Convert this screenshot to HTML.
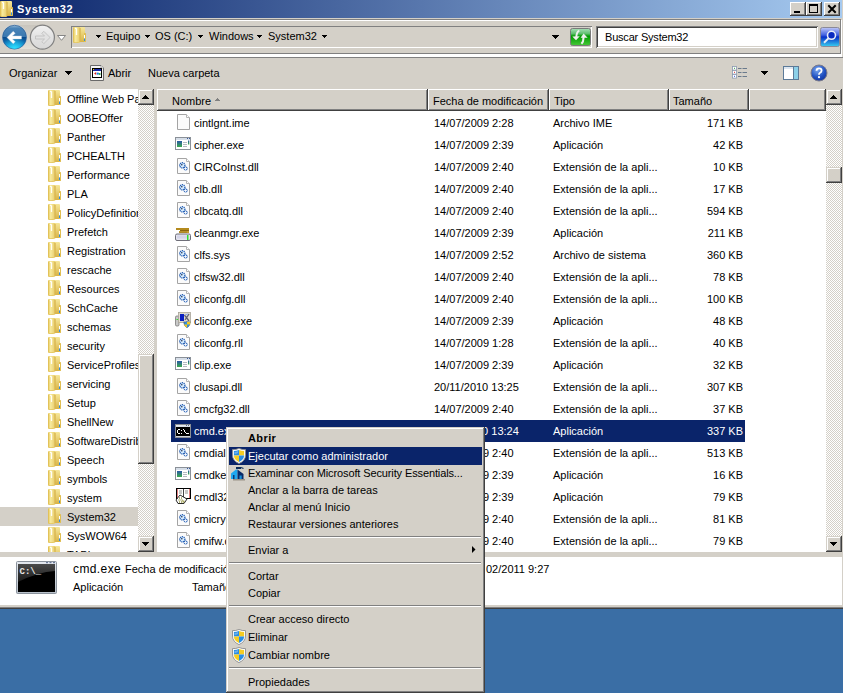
<!DOCTYPE html><html><head><meta charset="utf-8"><style>
*{margin:0;padding:0;box-sizing:border-box}
html,body{width:843px;height:693px;overflow:hidden;background:#3A6EA5}
body{position:relative;font-family:"Liberation Sans",sans-serif;font-size:11px;color:#000}
.ab{position:absolute}
.t{position:absolute;white-space:nowrap;line-height:13px}
.face{background:#D4D0C8}
.dither{background-color:#fff;background-image:linear-gradient(45deg,#D4D0C8 25%,transparent 25%,transparent 75%,#D4D0C8 75%),linear-gradient(45deg,#D4D0C8 25%,transparent 25%,transparent 75%,#D4D0C8 75%);background-size:2px 2px;background-position:0 0,1px 1px}
.btn{position:absolute;background:#D4D0C8;box-shadow:inset -1px -1px #404040,inset 1px 1px #fff,inset -2px -2px #808080}
.sb{position:absolute;background:#D4D0C8;box-shadow:inset -1px -1px #404040,inset 1px 1px #D4D0C8,inset -2px -2px #808080,inset 2px 2px #fff}
.hdr{position:absolute;background:#D4D0C8;box-shadow:inset -1px -1px #404040,inset 1px 1px #fff,inset -2px -2px #808080;top:89px;height:22px}
</style></head><body>
<svg width="0" height="0" style="position:absolute">
<defs>
<linearGradient id="fyL" x1="0" y1="0" x2="1" y2="0"><stop offset="0" stop-color="#E6C65A"/><stop offset="0.35" stop-color="#F7EA9C"/><stop offset="1" stop-color="#E6C866"/></linearGradient>
<linearGradient id="fyR" x1="0" y1="0" x2="0" y2="1"><stop offset="0" stop-color="#F6E79A"/><stop offset="1" stop-color="#D9B446"/></linearGradient>
<symbol id="fold" viewBox="0 0 13 16">
<path d="M6 0.5 Q6 0 7 0 H11 Q12 0 12 1 V15 H6Z" fill="url(#fyR)"/>
<path d="M11 6 H12.5 Q13 6 13 7 V14.5 Q13 15 12 15 H11Z" fill="#E0BE52"/>
<path d="M0 1 Q0 0 1 0 H6.5 L7.5 1 V15 Q7 16 5.5 16 H1.5 Q0 16 0 14.5Z" fill="url(#fyL)"/>
<path d="M0.4 1 V14.5 Q0.4 15.6 1.5 15.6 H5.5" stroke="#DCBA50" stroke-width="0.8" fill="none" opacity="0.8"/>
<rect x="6.5" y="1" width="1" height="14" fill="#CFA83E" opacity="0.75"/>
<path d="M2 1.2 L3.5 2 V8" stroke="#fff" stroke-width="1.3" fill="none" opacity="0.95"/>
<rect x="11" y="8" width="1" height="3.5" fill="#fff"/>
<rect x="11" y="11.5" width="1" height="2.5" fill="#2E8EE0"/>
</symbol>
<symbol id="doc" viewBox="0 0 13 16">
<path d="M0.5 0.5 H9.5 L12.5 3.5 V15.5 H0.5 Z" fill="#FBFBFB" stroke="#A4A4A4"/>
<path d="M9.5 0.5 V3.5 H12.5" fill="#fff" stroke="#B4B4B4"/>
</symbol>
<symbol id="dll" viewBox="0 0 13 16">
<path d="M0.5 0.5 H9.5 L12.5 3.5 V15.5 H0.5 Z" fill="#FBFBFB" stroke="#A4A4A4"/>
<path d="M9.5 0.5 V3.5 H12.5" fill="#fff" stroke="#B4B4B4"/>
<circle cx="5.3" cy="7.3" r="2.6" fill="#D8EEFF" stroke="#1E58B0" stroke-width="1.3" stroke-dasharray="1.2 0.7"/>
<circle cx="4.8" cy="6.8" r="0.8" fill="#1A2A50"/>
<circle cx="8.6" cy="10.6" r="2" fill="#2A64B8"/>
<path d="M8.6 9 V12.2 M7 10.6 H10.2" stroke="#fff" stroke-width="0.9"/>
</symbol>
<linearGradient id="bg2" x1="0" y1="0" x2="0" y2="1"><stop offset="0" stop-color="#2A58A8"/><stop offset="1" stop-color="#3AAA4A"/></linearGradient>
<symbol id="exe" viewBox="0 0 16 13">
<rect x="0.5" y="0.5" width="15" height="12" fill="#fff" stroke="#8A9098"/>
<rect x="1" y="1" width="14" height="2" fill="#D6DEE8"/>
<rect x="12" y="1" width="1" height="1" fill="#3A5A98"/><rect x="14" y="1" width="1" height="1" fill="#3A5A98"/>
<rect x="2" y="4" width="5" height="6" fill="url(#bg2)"/>
<path d="M8 5.5 H12 M8 7.5 H12 M8 9.5 H12" stroke="#B4B8C0"/>
<rect x="13" y="3.5" width="1.3" height="4" fill="url(#bg2)"/>
</symbol>
<symbol id="shield" viewBox="0 0 16 16">
<path d="M8 0.5 Q11.2 1.9 14.5 1.6 V7 Q14.6 12.6 8 15.6 Q1.4 12.6 1.5 7 V1.6 Q4.8 1.9 8 0.5Z" fill="#fff" stroke="#8C8C8C" stroke-width="0.9"/>
<path d="M8 2.1 Q5.4 3.1 2.9 3.1 V7.6 H8Z" fill="#2A8EE6"/>
<path d="M8 2.1 Q10.6 3.1 13.1 3.1 V7.6 H8Z" fill="#F6CC22"/>
<path d="M2.9 7.6 H8 V14 Q3.1 11.9 2.9 7.6Z" fill="#F6CC22"/>
<path d="M13.1 7.6 H8 V14 Q12.9 11.9 13.1 7.6Z" fill="#2A8EE6"/>
<path d="M3.5 4 Q5 3.8 7 3 V5 Q5 6 3.5 6Z" fill="#fff" opacity="0.3"/>
</symbol>
</defs></svg>

<div class="ab face" style="left:0;top:0;width:843px;height:609px"></div>
<div class="ab" style="left:0;top:0;width:842px;height:18px;background:linear-gradient(to right,#0A246A,#A6CAF0)"></div>
<svg class="ab" style="left:0px;top:1px" width="13" height="16" viewBox="0 0 13 16"><use href="#fold"/></svg>
<div class="t" style="left:17px;top:3px;color:#fff;font-weight:bold;letter-spacing:0.6px">System32</div>
<div class="btn" style="left:790px;top:2px;width:16px;height:14px"></div>
<div class="btn" style="left:806px;top:2px;width:16px;height:14px"></div>
<div class="btn" style="left:824px;top:2px;width:16px;height:14px"></div>
<div class="ab" style="left:794px;top:11px;width:6px;height:2px;background:#000"></div>
<div class="ab" style="left:809px;top:4px;width:9px;height:9px;border:1px solid #000;border-top-width:2px"></div>
<svg class="ab" style="left:824px;top:2px" width="16" height="14"><path d="M4.3 3.3 L11.7 10.7 M11.7 3.3 L4.3 10.7" stroke="#000" stroke-width="2"/></svg>
<div class="ab" style="left:0;top:19px;width:841px;height:1px;background:#808080"></div>
<div class="ab" style="left:0;top:20px;width:840px;height:1px;background:#fff"></div>
<svg class="ab" style="left:0;top:22px" width="70" height="30" viewBox="0 0 70 30">
<defs>
<linearGradient id="bkt" x1="0" y1="0" x2="0" y2="1"><stop offset="0" stop-color="#9ABCD8"/><stop offset="0.12" stop-color="#4A84B8"/><stop offset="0.49" stop-color="#3A78B0"/><stop offset="0.5" stop-color="#0A4A8C"/><stop offset="0.8" stop-color="#0C78C0"/><stop offset="1" stop-color="#18B0E0"/></linearGradient>
<radialGradient id="bkg" cx="0.5" cy="1" r="0.55"><stop offset="0" stop-color="#30E0FF"/><stop offset="1" stop-color="#30E0FF" stop-opacity="0"/></radialGradient>
<linearGradient id="fwt" x1="0" y1="0" x2="0" y2="1"><stop offset="0" stop-color="#F2F2F2"/><stop offset="0.5" stop-color="#E2E2E2"/><stop offset="1" stop-color="#D8D8D8"/></linearGradient>
<linearGradient id="pill" x1="0" y1="0" x2="0" y2="1"><stop offset="0" stop-color="#C9C5BD"/><stop offset="1" stop-color="#E2DFD8"/></linearGradient>
</defs>
<path d="M14 3 H42 V27 H14Z" fill="url(#pill)"/>
<circle cx="14.5" cy="15.2" r="12.6" fill="#C8D0D8"/>
<circle cx="14.5" cy="15.2" r="11.9" fill="url(#bkt)" stroke="#2A5A90" stroke-width="0.7"/>
<circle cx="14.5" cy="15.2" r="11.5" fill="url(#bkg)"/>
<path d="M7 15.5 L13.2 9.3 L15.2 11.3 L12.5 14 H21.5 V17 H12.5 L15.2 19.7 L13.2 21.7 Z" fill="#fff" stroke="#C8D4E0" stroke-width="0.4"/>
<circle cx="42.4" cy="15.2" r="12" fill="url(#fwt)" stroke="#808080" stroke-width="1.2"/>
<path d="M50 15.5 L43.8 9.3 L41.8 11.3 L44.5 14 H35.5 V17 H44.5 L41.8 19.7 L43.8 21.7 Z" fill="#E2E2E2" stroke="#B8B8B8" stroke-width="0.7"/>
<path d="M57.5 13.5 H65.5 L61.5 18.3 Z" fill="#fff" stroke="#7A7A7A" stroke-width="0.9"/>
</svg>
<div class="ab" style="left:71px;top:26px;width:521px;height:22px;box-shadow:inset 1px 1px #808080,inset -1px -1px #fff;background:#D4D0C8"></div>
<svg class="ab" style="left:73px;top:27px" width="13" height="16" viewBox="0 0 13 16"><use href="#fold"/></svg>
<svg class="ab" style="left:96px;top:35px" width="5" height="3"><path d="M0 0h5v1h-1v1h-1v1h-1V2H1V1H0z" fill="#000"/></svg>
<div class="t" style="left:106px;top:30px">Equipo</div>
<svg class="ab" style="left:145px;top:35px" width="5" height="3"><path d="M0 0h5v1h-1v1h-1v1h-1V2H1V1H0z" fill="#000"/></svg>
<div class="t" style="left:155px;top:30px">OS (C:)</div>
<svg class="ab" style="left:198px;top:35px" width="5" height="3"><path d="M0 0h5v1h-1v1h-1v1h-1V2H1V1H0z" fill="#000"/></svg>
<div class="t" style="left:209px;top:30px">Windows</div>
<svg class="ab" style="left:257px;top:35px" width="5" height="3"><path d="M0 0h5v1h-1v1h-1v1h-1V2H1V1H0z" fill="#000"/></svg>
<div class="t" style="left:268px;top:30px">System32</div>
<svg class="ab" style="left:322px;top:35px" width="5" height="3"><path d="M0 0h5v1h-1v1h-1v1h-1V2H1V1H0z" fill="#000"/></svg>
<svg class="ab" style="left:552px;top:35px" width="7" height="4"><path d="M0 0h7v1h-1v1h-1v1h-1v1h-1V3H2V2H1V1H0z" fill="#000"/></svg>
<svg class="ab" style="left:570px;top:28px" width="21" height="18" viewBox="0 0 21 18">
<defs><linearGradient id="rf" x1="0" y1="0" x2="0" y2="1"><stop offset="0" stop-color="#A8E0B8"/><stop offset="0.3" stop-color="#60C070"/><stop offset="0.45" stop-color="#009A00"/><stop offset="1" stop-color="#48C838"/></linearGradient></defs>
<rect x="0.5" y="0.5" width="20" height="17" rx="2" fill="url(#rf)" stroke="#7A7A7A"/>
<path d="M2.3 8.6 L9.8 8.2 L6 12.3 Z" fill="#F0F0F0"/>
<path d="M9.3 2.6 Q6.6 3.6 6.3 9" stroke="#F0F0F0" stroke-width="2" fill="none"/>
<path d="M10.6 9.8 L17.6 9.8 L13.6 5.6Z" fill="#F0F0F0"/>
<path d="M13.5 9 Q13.6 13.8 11.4 15.8" stroke="#F0F0F0" stroke-width="2" fill="none"/>
</svg>
<div class="ab" style="left:596px;top:26px;width:222px;height:22px;background:#fff;box-shadow:inset 1px 1px #808080,inset -1px -1px #fff,inset 2px 2px #404040,inset -2px -2px #D4D0C8"></div>
<div class="t" style="left:605px;top:31px;letter-spacing:-0.2px">Buscar System32</div>
<svg class="ab" style="left:820px;top:27px" width="20" height="20" viewBox="0 0 20 20">
<defs><linearGradient id="sg" x1="0" y1="0" x2="0" y2="1"><stop offset="0" stop-color="#C0C8F8"/><stop offset="0.4" stop-color="#4060E0"/><stop offset="0.5" stop-color="#0830C8"/><stop offset="1" stop-color="#38D0F0"/></linearGradient></defs>
<rect x="0.5" y="0.5" width="19" height="19" rx="2" fill="url(#sg)" stroke="#8A8A98"/>
<circle cx="11.5" cy="8.3" r="4" fill="#0A2AC0" stroke="#E8EEF8" stroke-width="1.6"/>
<path d="M8.5 11.3 L4 15.8" stroke="#E8EEF8" stroke-width="2"/>
</svg>
<div class="ab" style="left:840px;top:19px;width:1px;height:35px;background:#808080"></div>
<div class="ab" style="left:841px;top:20px;width:1px;height:37px;background:#fff"></div>
<div class="ab" style="left:842px;top:18px;width:1px;height:40px;background:#D4D0C8"></div>
<div class="ab" style="left:0;top:53px;width:841px;height:1px;background:#808080"></div>
<div class="ab" style="left:0;top:54px;width:842px;height:3px;background:#fff"></div>
<div class="ab" style="left:0;top:57px;width:843px;height:1px;background:#808080"></div>
<div class="t" style="left:9px;top:67px">Organizar</div>
<svg class="ab" style="left:65px;top:71px" width="7" height="4"><path d="M0 0h7v1h-1v1h-1v1h-1v1h-1V3H2V2H1V1H0z" fill="#000"/></svg>
<svg class="ab" style="left:90px;top:65px" width="15" height="16" viewBox="0 0 15 16">
<path d="M0.5 0.5 H11 L13.5 3 V15.5 H0.5Z" fill="#F6F6F6" stroke="#6A6A6A"/>
<path d="M11 0.5 V3 H13.5" fill="#fff" stroke="#9A9A9A" stroke-width="0.8"/>
<rect x="2.5" y="3.5" width="9" height="9" fill="#fff" stroke="#000"/>
<rect x="3" y="4" width="8" height="2" fill="#1828A8"/>
<rect x="3" y="4" width="1" height="1" fill="#F0D000"/>
<path d="M4 8.5 L6.2 7 V10Z" fill="#E02020"/>
<circle cx="7.8" cy="8.6" r="1.2" fill="#2080E0"/>
<circle cx="9.7" cy="9" r="1" fill="#20B040"/>
</svg>
<div class="t" style="left:108px;top:67px">Abrir</div>
<div class="t" style="left:148px;top:67px">Nueva carpeta</div>
<svg class="ab" style="left:732px;top:66px" width="16" height="13" viewBox="0 0 16 13">
<rect x="0.5" y="0.5" width="4" height="3.6" fill="#fff" stroke="#8A9AB0" stroke-width="0.8"/><rect x="2" y="1.8" width="1" height="1" fill="#30A040"/>
<rect x="0.5" y="4.5" width="4" height="3.6" fill="#fff" stroke="#8A9AB0" stroke-width="0.8"/><rect x="2" y="5.8" width="1" height="1" fill="#E03030"/>
<rect x="0.5" y="8.5" width="4" height="3.6" fill="#fff" stroke="#8A9AB0" stroke-width="0.8"/><rect x="2" y="9.8" width="1" height="1" fill="#3050E0"/>
<path d="M6 2.5 H9.5 M10.5 2.5 H15 M6 6.5 H9.5 M10.5 6.5 H15 M6 10.5 H9.5 M10.5 10.5 H15" stroke="#6A7A8C" stroke-width="1"/>
</svg>
<svg class="ab" style="left:761px;top:71px" width="7" height="4"><path d="M0 0h7v1h-1v1h-1v1h-1v1h-1V3H2V2H1V1H0z" fill="#000"/></svg>
<svg class="ab" style="left:783px;top:66px" width="16" height="14" viewBox="0 0 16 14">
<rect x="0.5" y="0.5" width="15" height="13" fill="#fff" stroke="#5C7A98"/>
<rect x="1" y="1" width="9" height="2" fill="#DDE6F0"/>
<rect x="10" y="1" width="5" height="12" fill="#8CD0E8"/>
<path d="M10.5 1 V13" stroke="#5C7A98"/>
</svg>
<svg class="ab" style="left:810px;top:64px" width="18" height="18" viewBox="0 0 18 18">
<defs><radialGradient id="hg" cx="0.4" cy="0.3" r="0.8"><stop offset="0" stop-color="#7AA8F0"/><stop offset="0.6" stop-color="#2050C0"/><stop offset="1" stop-color="#10309A"/></radialGradient></defs>
<circle cx="9" cy="9" r="8" fill="url(#hg)" stroke="#7A7A8A" stroke-width="1"/>
<path d="M6.5 6.8 Q6.5 4.3 9 4.3 Q11.6 4.3 11.6 6.6 Q11.6 8.2 9.8 9 Q9 9.4 9 10.8" stroke="#fff" stroke-width="1.8" fill="none"/>
<circle cx="9" cy="13.2" r="1.1" fill="#fff"/>
</svg>
<div class="ab" style="left:0;top:89px;width:138px;height:463px;background:#fff;overflow:hidden">
<svg class="ab" style="left:48px;top:1px" width="13" height="16" viewBox="0 0 13 16"><use href="#fold"/></svg>
<div class="t" style="left:67px;top:4px">Offline Web Pages</div>
<svg class="ab" style="left:48px;top:20px" width="13" height="16" viewBox="0 0 13 16"><use href="#fold"/></svg>
<div class="t" style="left:67px;top:23px">OOBEOffer</div>
<svg class="ab" style="left:48px;top:39px" width="13" height="16" viewBox="0 0 13 16"><use href="#fold"/></svg>
<div class="t" style="left:67px;top:42px">Panther</div>
<svg class="ab" style="left:48px;top:58px" width="13" height="16" viewBox="0 0 13 16"><use href="#fold"/></svg>
<div class="t" style="left:67px;top:61px">PCHEALTH</div>
<svg class="ab" style="left:48px;top:77px" width="13" height="16" viewBox="0 0 13 16"><use href="#fold"/></svg>
<div class="t" style="left:67px;top:80px">Performance</div>
<svg class="ab" style="left:48px;top:96px" width="13" height="16" viewBox="0 0 13 16"><use href="#fold"/></svg>
<div class="t" style="left:67px;top:99px">PLA</div>
<svg class="ab" style="left:48px;top:115px" width="13" height="16" viewBox="0 0 13 16"><use href="#fold"/></svg>
<div class="t" style="left:67px;top:118px">PolicyDefinitions</div>
<svg class="ab" style="left:48px;top:134px" width="13" height="16" viewBox="0 0 13 16"><use href="#fold"/></svg>
<div class="t" style="left:67px;top:137px">Prefetch</div>
<svg class="ab" style="left:48px;top:153px" width="13" height="16" viewBox="0 0 13 16"><use href="#fold"/></svg>
<div class="t" style="left:67px;top:156px">Registration</div>
<svg class="ab" style="left:48px;top:172px" width="13" height="16" viewBox="0 0 13 16"><use href="#fold"/></svg>
<div class="t" style="left:67px;top:175px">rescache</div>
<svg class="ab" style="left:48px;top:191px" width="13" height="16" viewBox="0 0 13 16"><use href="#fold"/></svg>
<div class="t" style="left:67px;top:194px">Resources</div>
<svg class="ab" style="left:48px;top:210px" width="13" height="16" viewBox="0 0 13 16"><use href="#fold"/></svg>
<div class="t" style="left:67px;top:213px">SchCache</div>
<svg class="ab" style="left:48px;top:229px" width="13" height="16" viewBox="0 0 13 16"><use href="#fold"/></svg>
<div class="t" style="left:67px;top:232px">schemas</div>
<svg class="ab" style="left:48px;top:248px" width="13" height="16" viewBox="0 0 13 16"><use href="#fold"/></svg>
<div class="t" style="left:67px;top:251px">security</div>
<svg class="ab" style="left:48px;top:267px" width="13" height="16" viewBox="0 0 13 16"><use href="#fold"/></svg>
<div class="t" style="left:67px;top:270px">ServiceProfiles</div>
<svg class="ab" style="left:48px;top:286px" width="13" height="16" viewBox="0 0 13 16"><use href="#fold"/></svg>
<div class="t" style="left:67px;top:289px">servicing</div>
<svg class="ab" style="left:48px;top:305px" width="13" height="16" viewBox="0 0 13 16"><use href="#fold"/></svg>
<div class="t" style="left:67px;top:308px">Setup</div>
<svg class="ab" style="left:48px;top:324px" width="13" height="16" viewBox="0 0 13 16"><use href="#fold"/></svg>
<div class="t" style="left:67px;top:327px">ShellNew</div>
<svg class="ab" style="left:48px;top:343px" width="13" height="16" viewBox="0 0 13 16"><use href="#fold"/></svg>
<div class="t" style="left:67px;top:346px">SoftwareDistribution</div>
<svg class="ab" style="left:48px;top:362px" width="13" height="16" viewBox="0 0 13 16"><use href="#fold"/></svg>
<div class="t" style="left:67px;top:365px">Speech</div>
<svg class="ab" style="left:48px;top:381px" width="13" height="16" viewBox="0 0 13 16"><use href="#fold"/></svg>
<div class="t" style="left:67px;top:384px">symbols</div>
<svg class="ab" style="left:48px;top:400px" width="13" height="16" viewBox="0 0 13 16"><use href="#fold"/></svg>
<div class="t" style="left:67px;top:403px">system</div>
<div class="ab" style="left:0;top:418px;width:138px;height:19px;background:#D4D0C8"></div>
<svg class="ab" style="left:48px;top:419px" width="13" height="16" viewBox="0 0 13 16"><use href="#fold"/></svg>
<div class="t" style="left:67px;top:422px">System32</div>
<svg class="ab" style="left:48px;top:438px" width="13" height="16" viewBox="0 0 13 16"><use href="#fold"/></svg>
<div class="t" style="left:67px;top:441px">SysWOW64</div>
<svg class="ab" style="left:48px;top:457px" width="13" height="16" viewBox="0 0 13 16"><use href="#fold"/></svg>
<div class="t" style="left:67px;top:460px">TAPI</div>
</div>
<div class="ab dither" style="left:138px;top:89px;width:16px;height:463px"></div>
<div class="sb" style="left:138px;top:89px;width:16px;height:16px"></div>
<svg class="ab" style="left:142px;top:95px" width="7" height="4"><path d="M3 0h1v1h1v1h1v1h1v1H0V3h1V2h1V1h1z" fill="#000"/></svg>
<div class="sb" style="left:138px;top:536px;width:16px;height:16px"></div>
<svg class="ab" style="left:142px;top:542px" width="7" height="4"><path d="M0 0h7v1h-1v1h-1v1h-1v1h-1V3H2V2H1V1H0z" fill="#000"/></svg>
<div class="sb" style="left:138px;top:354px;width:16px;height:110px"></div>
<div class="ab" style="left:157px;top:89px;width:669px;height:463px;background:#fff"></div>
<div class="hdr" style="left:157px;width:271px"></div>
<div class="t" style="left:172px;top:95px">Nombre</div>
<div class="hdr" style="left:428px;width:121px"></div>
<div class="t" style="left:433px;top:95px">Fecha de modificación</div>
<div class="hdr" style="left:549px;width:120px"></div>
<div class="t" style="left:554px;top:95px">Tipo</div>
<div class="hdr" style="left:669px;width:80px"></div>
<div class="t" style="left:673px;top:95px">Tamaño</div>
<div class="hdr" style="left:749px;width:77px"></div>
<svg class="ab" style="left:215px;top:98px" width="5" height="3"><path d="M2 0h1v1h1v1h1v1H0V2h1V1h1z" fill="#808080"/></svg>
<div class="ab" style="left:157px;top:111px;width:669px;height:441px;overflow:hidden">
<svg class="ab" style="left:20px;top:3px" width="13" height="16"><use href="#doc"/></svg>
<div class="t" style="left:37px;top:6px;color:#000">cintlgnt.ime</div>
<div class="t" style="left:277px;top:6px;color:#000">14/07/2009 2:28</div>
<div class="t" style="left:396px;top:6px;color:#000">Archivo IME</div>
<div class="t" style="left:501px;width:85px;text-align:right;top:6px;color:#000">171 KB</div>
<svg class="ab" style="left:18px;top:26px" width="16" height="13"><use href="#exe"/></svg>
<div class="t" style="left:37px;top:28px;color:#000">cipher.exe</div>
<div class="t" style="left:277px;top:28px;color:#000">14/07/2009 2:39</div>
<div class="t" style="left:396px;top:28px;color:#000">Aplicación</div>
<div class="t" style="left:501px;width:85px;text-align:right;top:28px;color:#000">42 KB</div>
<svg class="ab" style="left:20px;top:47px" width="13" height="16"><use href="#dll"/></svg>
<div class="t" style="left:37px;top:50px;color:#000">CIRCoInst.dll</div>
<div class="t" style="left:277px;top:50px;color:#000">14/07/2009 2:40</div>
<div class="t" style="left:396px;top:50px;color:#000">Extensión de la apli...</div>
<div class="t" style="left:501px;width:85px;text-align:right;top:50px;color:#000">10 KB</div>
<svg class="ab" style="left:20px;top:69px" width="13" height="16"><use href="#dll"/></svg>
<div class="t" style="left:37px;top:72px;color:#000">clb.dll</div>
<div class="t" style="left:277px;top:72px;color:#000">14/07/2009 2:40</div>
<div class="t" style="left:396px;top:72px;color:#000">Extensión de la apli...</div>
<div class="t" style="left:501px;width:85px;text-align:right;top:72px;color:#000">17 KB</div>
<svg class="ab" style="left:20px;top:91px" width="13" height="16"><use href="#dll"/></svg>
<div class="t" style="left:37px;top:94px;color:#000">clbcatq.dll</div>
<div class="t" style="left:277px;top:94px;color:#000">14/07/2009 2:40</div>
<div class="t" style="left:396px;top:94px;color:#000">Extensión de la apli...</div>
<div class="t" style="left:501px;width:85px;text-align:right;top:94px;color:#000">594 KB</div>
<svg class="ab" style="left:18px;top:117px" width="16" height="13" viewBox="0 0 16 13"><rect x="1" y="0" width="13" height="2" fill="#B48A1E"/><rect x="5" y="2" width="9" height="1" fill="#8A6410"/><rect x="4" y="3" width="10" height="2" fill="#C49A30"/><path d="M5 3.5 V5 M7 3.5 V5 M9 3.5 V5 M11 3.5 V5" stroke="#7A5A10" stroke-width="0.6"/><rect x="0.5" y="6" width="15" height="6.5" rx="1.5" fill="#E4E4EE" stroke="#6E6E78"/><rect x="2" y="7.5" width="10" height="3" fill="#D4D4E8"/><rect x="12" y="7" width="1.5" height="5" fill="#30E030"/></svg>
<div class="t" style="left:37px;top:116px;color:#000">cleanmgr.exe</div>
<div class="t" style="left:277px;top:116px;color:#000">14/07/2009 2:39</div>
<div class="t" style="left:396px;top:116px;color:#000">Aplicación</div>
<div class="t" style="left:501px;width:85px;text-align:right;top:116px;color:#000">211 KB</div>
<svg class="ab" style="left:20px;top:135px" width="13" height="16"><use href="#dll"/></svg>
<div class="t" style="left:37px;top:138px;color:#000">clfs.sys</div>
<div class="t" style="left:277px;top:138px;color:#000">14/07/2009 2:52</div>
<div class="t" style="left:396px;top:138px;color:#000">Archivo de sistema</div>
<div class="t" style="left:501px;width:85px;text-align:right;top:138px;color:#000">360 KB</div>
<svg class="ab" style="left:20px;top:157px" width="13" height="16"><use href="#dll"/></svg>
<div class="t" style="left:37px;top:160px;color:#000">clfsw32.dll</div>
<div class="t" style="left:277px;top:160px;color:#000">14/07/2009 2:40</div>
<div class="t" style="left:396px;top:160px;color:#000">Extensión de la apli...</div>
<div class="t" style="left:501px;width:85px;text-align:right;top:160px;color:#000">78 KB</div>
<svg class="ab" style="left:20px;top:179px" width="13" height="16"><use href="#dll"/></svg>
<div class="t" style="left:37px;top:182px;color:#000">cliconfg.dll</div>
<div class="t" style="left:277px;top:182px;color:#000">14/07/2009 2:40</div>
<div class="t" style="left:396px;top:182px;color:#000">Extensión de la apli...</div>
<div class="t" style="left:501px;width:85px;text-align:right;top:182px;color:#000">100 KB</div>
<svg class="ab" style="left:18px;top:201px" width="16" height="16" viewBox="0 0 16 16"><rect x="0.5" y="4" width="3.5" height="10" rx="1.2" fill="#C8C8C8" stroke="#6A6A6A" stroke-width="0.7"/><rect x="1.5" y="7" width="2" height="1" fill="#30E030"/><rect x="3.5" y="0.5" width="12" height="10" fill="#E0DCD0" stroke="#A8A498" stroke-width="0.8"/><rect x="5" y="2" width="4" height="7" fill="#0A20C0"/><path d="M9.5 3 L14 9 M14 2 L10 8" stroke="#606070" stroke-width="1.3"/><path d="M10 3 L13 2" stroke="#90B0F0" stroke-width="1"/><path d="M11.5 9.5 Q13.5 10.3 15.2 9.8 Q15.5 14 12 15.8 Q8.5 14 8.8 9.8 Q10.5 10.3 11.5 9.5Z" fill="#2E90EA" stroke="#505050" stroke-width="0.5"/><path d="M12 10 V12.6 H15.2 Q15.3 11 15.2 9.8 Q13.5 10.3 12 10Z M12 12.6 H8.9 Q9.5 14.6 12 15.6Z" fill="#F4C81E"/></svg>
<div class="t" style="left:37px;top:204px;color:#000">cliconfg.exe</div>
<div class="t" style="left:277px;top:204px;color:#000">14/07/2009 2:39</div>
<div class="t" style="left:396px;top:204px;color:#000">Aplicación</div>
<div class="t" style="left:501px;width:85px;text-align:right;top:204px;color:#000">48 KB</div>
<svg class="ab" style="left:20px;top:223px" width="13" height="16"><use href="#dll"/></svg>
<div class="t" style="left:37px;top:226px;color:#000">cliconfg.rll</div>
<div class="t" style="left:277px;top:226px;color:#000">14/07/2009 1:28</div>
<div class="t" style="left:396px;top:226px;color:#000">Extensión de la apli...</div>
<div class="t" style="left:501px;width:85px;text-align:right;top:226px;color:#000">40 KB</div>
<svg class="ab" style="left:18px;top:246px" width="16" height="13"><use href="#exe"/></svg>
<div class="t" style="left:37px;top:248px;color:#000">clip.exe</div>
<div class="t" style="left:277px;top:248px;color:#000">14/07/2009 2:39</div>
<div class="t" style="left:396px;top:248px;color:#000">Aplicación</div>
<div class="t" style="left:501px;width:85px;text-align:right;top:248px;color:#000">32 KB</div>
<svg class="ab" style="left:20px;top:267px" width="13" height="16"><use href="#dll"/></svg>
<div class="t" style="left:37px;top:270px;color:#000">clusapi.dll</div>
<div class="t" style="left:277px;top:270px;color:#000">20/11/2010 13:25</div>
<div class="t" style="left:396px;top:270px;color:#000">Extensión de la apli...</div>
<div class="t" style="left:501px;width:85px;text-align:right;top:270px;color:#000">307 KB</div>
<svg class="ab" style="left:20px;top:289px" width="13" height="16"><use href="#dll"/></svg>
<div class="t" style="left:37px;top:292px;color:#000">cmcfg32.dll</div>
<div class="t" style="left:277px;top:292px;color:#000">14/07/2009 2:40</div>
<div class="t" style="left:396px;top:292px;color:#000">Extensión de la apli...</div>
<div class="t" style="left:501px;width:85px;text-align:right;top:292px;color:#000">37 KB</div>
<div class="ab" style="left:14px;top:309px;width:574px;height:22px;background:#0A246A"></div>
<svg class="ab" style="left:18px;top:313px" width="16" height="14" viewBox="0 0 16 14"><rect x="0.5" y="0.5" width="15" height="13" fill="#D0D4DA" stroke="#8A8E94"/><rect x="1" y="1" width="14" height="1.5" fill="#E6EAF0"/><rect x="11" y="1" width="1" height="1" fill="#5A6A8A"/><rect x="13" y="1" width="1" height="1" fill="#5A6A8A"/><rect x="1" y="3" width="14" height="9" fill="#000"/><g fill="#fff"><rect x="2" y="6" width="1" height="3"/><rect x="3" y="5" width="2" height="1"/><rect x="3" y="9" width="2" height="1"/><rect x="6" y="6" width="1" height="1"/><rect x="6" y="9" width="1" height="1"/><rect x="8" y="5" width="1" height="1"/><rect x="9" y="6" width="1" height="2"/><rect x="10" y="8" width="1" height="1"/><rect x="11" y="9" width="1" height="1"/><rect x="12" y="9" width="2" height="1"/></g></svg>
<div class="t" style="left:37px;top:314px;color:#fff">cmd.exe</div>
<div class="t" style="left:277px;top:314px;color:#fff">20/11/2010 13:24</div>
<div class="t" style="left:396px;top:314px;color:#fff">Aplicación</div>
<div class="t" style="left:501px;width:85px;text-align:right;top:314px;color:#fff">337 KB</div>
<svg class="ab" style="left:20px;top:333px" width="13" height="16"><use href="#dll"/></svg>
<div class="t" style="left:37px;top:336px;color:#000">cmdial32.dll</div>
<div class="t" style="left:277px;top:336px;color:#000">14/07/2009 2:40</div>
<div class="t" style="left:396px;top:336px;color:#000">Extensión de la apli...</div>
<div class="t" style="left:501px;width:85px;text-align:right;top:336px;color:#000">513 KB</div>
<svg class="ab" style="left:18px;top:356px" width="16" height="13"><use href="#exe"/></svg>
<div class="t" style="left:37px;top:358px;color:#000">cmdkey.exe</div>
<div class="t" style="left:277px;top:358px;color:#000">14/07/2009 2:39</div>
<div class="t" style="left:396px;top:358px;color:#000">Aplicación</div>
<div class="t" style="left:501px;width:85px;text-align:right;top:358px;color:#000">16 KB</div>
<svg class="ab" style="left:18px;top:377px" width="16" height="16" viewBox="0 0 16 16"><rect x="1.5" y="0.5" width="14" height="10" fill="#fff" stroke="#000"/><rect x="2" y="1" width="1" height="9" fill="#E08080"/><rect x="14" y="1" width="1" height="9" fill="#E08080"/><path d="M8.5 1 V10" stroke="#444"/><rect x="4" y="2" width="3" height="4" fill="#C8C8C8"/><rect x="10" y="2" width="3" height="4" fill="#C8C8C8"/><path d="M1 12 L5 7 L12 11 L9 15.5 H3Z" fill="#fff" stroke="#111" stroke-width="0.9"/><path d="M4 10 H7 M3.5 12 H8 M4 14 H8" stroke="#9A9A50" stroke-width="1.3" stroke-dasharray="1 1"/><path d="M7 12 L10 13 L8 15.5Z" fill="#A8A860"/></svg>
<div class="t" style="left:37px;top:380px;color:#000">cmdl32.exe</div>
<div class="t" style="left:277px;top:380px;color:#000">14/07/2009 2:39</div>
<div class="t" style="left:396px;top:380px;color:#000">Aplicación</div>
<div class="t" style="left:501px;width:85px;text-align:right;top:380px;color:#000">79 KB</div>
<svg class="ab" style="left:20px;top:399px" width="13" height="16"><use href="#dll"/></svg>
<div class="t" style="left:37px;top:402px;color:#000">cmicryptinstall.dll</div>
<div class="t" style="left:277px;top:402px;color:#000">14/07/2009 2:40</div>
<div class="t" style="left:396px;top:402px;color:#000">Extensión de la apli...</div>
<div class="t" style="left:501px;width:85px;text-align:right;top:402px;color:#000">81 KB</div>
<svg class="ab" style="left:20px;top:421px" width="13" height="16"><use href="#dll"/></svg>
<div class="t" style="left:37px;top:424px;color:#000">cmifw.dll</div>
<div class="t" style="left:277px;top:424px;color:#000">14/07/2009 2:40</div>
<div class="t" style="left:396px;top:424px;color:#000">Extensión de la apli...</div>
<div class="t" style="left:501px;width:85px;text-align:right;top:424px;color:#000">79 KB</div>
</div>
<div class="ab dither" style="left:826px;top:89px;width:16px;height:463px"></div>
<div class="sb" style="left:826px;top:89px;width:16px;height:16px"></div>
<svg class="ab" style="left:830px;top:95px" width="7" height="4"><path d="M3 0h1v1h1v1h1v1h1v1H0V3h1V2h1V1h1z" fill="#000"/></svg>
<div class="sb" style="left:826px;top:536px;width:16px;height:16px"></div>
<svg class="ab" style="left:830px;top:542px" width="7" height="4"><path d="M0 0h7v1h-1v1h-1v1h-1v1h-1V3H2V2H1V1H0z" fill="#000"/></svg>
<div class="sb" style="left:826px;top:167px;width:16px;height:16px"></div>
<div class="ab" style="left:0;top:557px;width:842px;height:48px;background:#fff"></div>
<svg class="ab" style="left:16px;top:561px" width="41" height="33" viewBox="0 0 41 33">
<defs><linearGradient id="cg" x1="0" y1="0" x2="0" y2="1"><stop offset="0" stop-color="#4A4A4A"/><stop offset="1" stop-color="#1A1A1A"/></linearGradient>
<linearGradient id="cfr" x1="0" y1="0" x2="0" y2="1"><stop offset="0" stop-color="#E4E8EE"/><stop offset="1" stop-color="#B8C0CA"/></linearGradient></defs>
<rect x="0.5" y="0.5" width="40" height="32" rx="1" fill="url(#cfr)" stroke="#8A929C"/>
<rect x="2" y="3" width="37" height="28" fill="#000"/>
<path d="M2 3 H39 V10 Q22 11 2 21 Z" fill="url(#cg)"/>
<text x="3.5" y="12.5" font-family="Liberation Mono" font-size="9" font-weight="bold" fill="#E8E8E8">C:\_</text>
<rect x="30" y="1" width="2" height="1.2" fill="#6A7A9A"/><rect x="33.5" y="1" width="2" height="1.2" fill="#6A7A9A"/><rect x="37" y="1" width="2" height="1.2" fill="#6A7A9A"/>
</svg>
<div class="t" style="left:73px;top:562px;font-size:12px;line-height:14px;letter-spacing:0.4px">cmd.exe</div>
<div class="t" style="left:125px;top:563px">Fecha de modificación:</div>
<div class="t" style="left:486px;top:563px">02/2011 9:27</div>
<div class="t" style="left:73px;top:581px">Aplicación</div>
<div class="t" style="left:192px;top:581px">Tamaño: 337 KB</div>
<div class="ab" style="left:0;top:607px;width:843px;height:1px;background:#808080"></div>
<div class="ab" style="left:0;top:608px;width:843px;height:1px;background:#404040"></div>
<div class="ab" style="left:226px;top:427px;width:259px;height:266px;background:#D4D0C8;box-shadow:inset -1px -1px #404040,inset 1px 1px #D4D0C8,inset -2px -2px #808080,inset 2px 2px #fff"></div>
<div class="t" style="left:248px;top:432px;color:#000;font-weight:bold;letter-spacing:0.4px;">Abrir</div>
<div class="ab" style="left:229px;top:447px;width:253px;height:18px;background:#0A246A"></div>
<svg class="ab" style="left:231px;top:448px" width="16" height="16"><use href="#shield"/></svg>
<div class="t" style="left:248px;top:450px;color:#fff;">Ejecutar como administrador</div>
<svg class="ab" style="left:231px;top:466px" width="16" height="16" viewBox="0 0 16 16"><rect x="2" y="13" width="12" height="1.5" fill="#6A6050" opacity="0.55"/><rect x="5" y="1" width="5" height="2" fill="#0A2A58"/><path d="M10 1.5 L12.5 2.5" stroke="#0A2A58" stroke-width="1.2"/><path d="M0 13 V7.5 L5 3.5 H6.5 V13Z" fill="#1FA8F0"/><path d="M6.5 3.5 L12.5 8 V13 H6.5Z" fill="#0A2A68"/><rect x="2" y="9" width="1.5" height="4" fill="#0A3A78"/><rect x="8.5" y="9.5" width="2.2" height="3.5" fill="#1A90D8"/></svg>
<div class="t" style="left:248px;top:467px;color:#000;letter-spacing:-0.12px;">Examinar con Microsoft Security Essentials...</div>
<div class="t" style="left:248px;top:484px;color:#000;">Anclar a la barra de tareas</div>
<div class="t" style="left:248px;top:501px;color:#000;">Anclar al menú Inicio</div>
<div class="t" style="left:248px;top:518px;color:#000;">Restaurar versiones anteriores</div>
<div class="ab" style="left:229px;top:536px;width:252px;height:1px;background:#808080"></div>
<div class="ab" style="left:229px;top:537px;width:252px;height:1px;background:#fff"></div>
<svg class="ab" style="left:472px;top:546px" width="4" height="8"><path d="M0 0 V7 L3.5 3.5Z" fill="#000"/></svg>
<div class="t" style="left:248px;top:544px;color:#000;">Enviar a</div>
<div class="ab" style="left:229px;top:562px;width:252px;height:1px;background:#808080"></div>
<div class="ab" style="left:229px;top:563px;width:252px;height:1px;background:#fff"></div>
<div class="t" style="left:248px;top:570px;color:#000;">Cortar</div>
<div class="t" style="left:248px;top:587px;color:#000;">Copiar</div>
<div class="ab" style="left:229px;top:605px;width:252px;height:1px;background:#808080"></div>
<div class="ab" style="left:229px;top:606px;width:252px;height:1px;background:#fff"></div>
<div class="t" style="left:248px;top:613px;color:#000;">Crear acceso directo</div>
<svg class="ab" style="left:231px;top:628.5px" width="16" height="16"><use href="#shield"/></svg>
<div class="t" style="left:248px;top:631px;color:#000;">Eliminar</div>
<svg class="ab" style="left:231px;top:646.5px" width="16" height="16"><use href="#shield"/></svg>
<div class="t" style="left:248px;top:649px;color:#000;">Cambiar nombre</div>
<div class="ab" style="left:229px;top:667px;width:252px;height:1px;background:#808080"></div>
<div class="ab" style="left:229px;top:668px;width:252px;height:1px;background:#fff"></div>
<div class="t" style="left:248px;top:676px;color:#000;">Propiedades</div>
</body></html>
